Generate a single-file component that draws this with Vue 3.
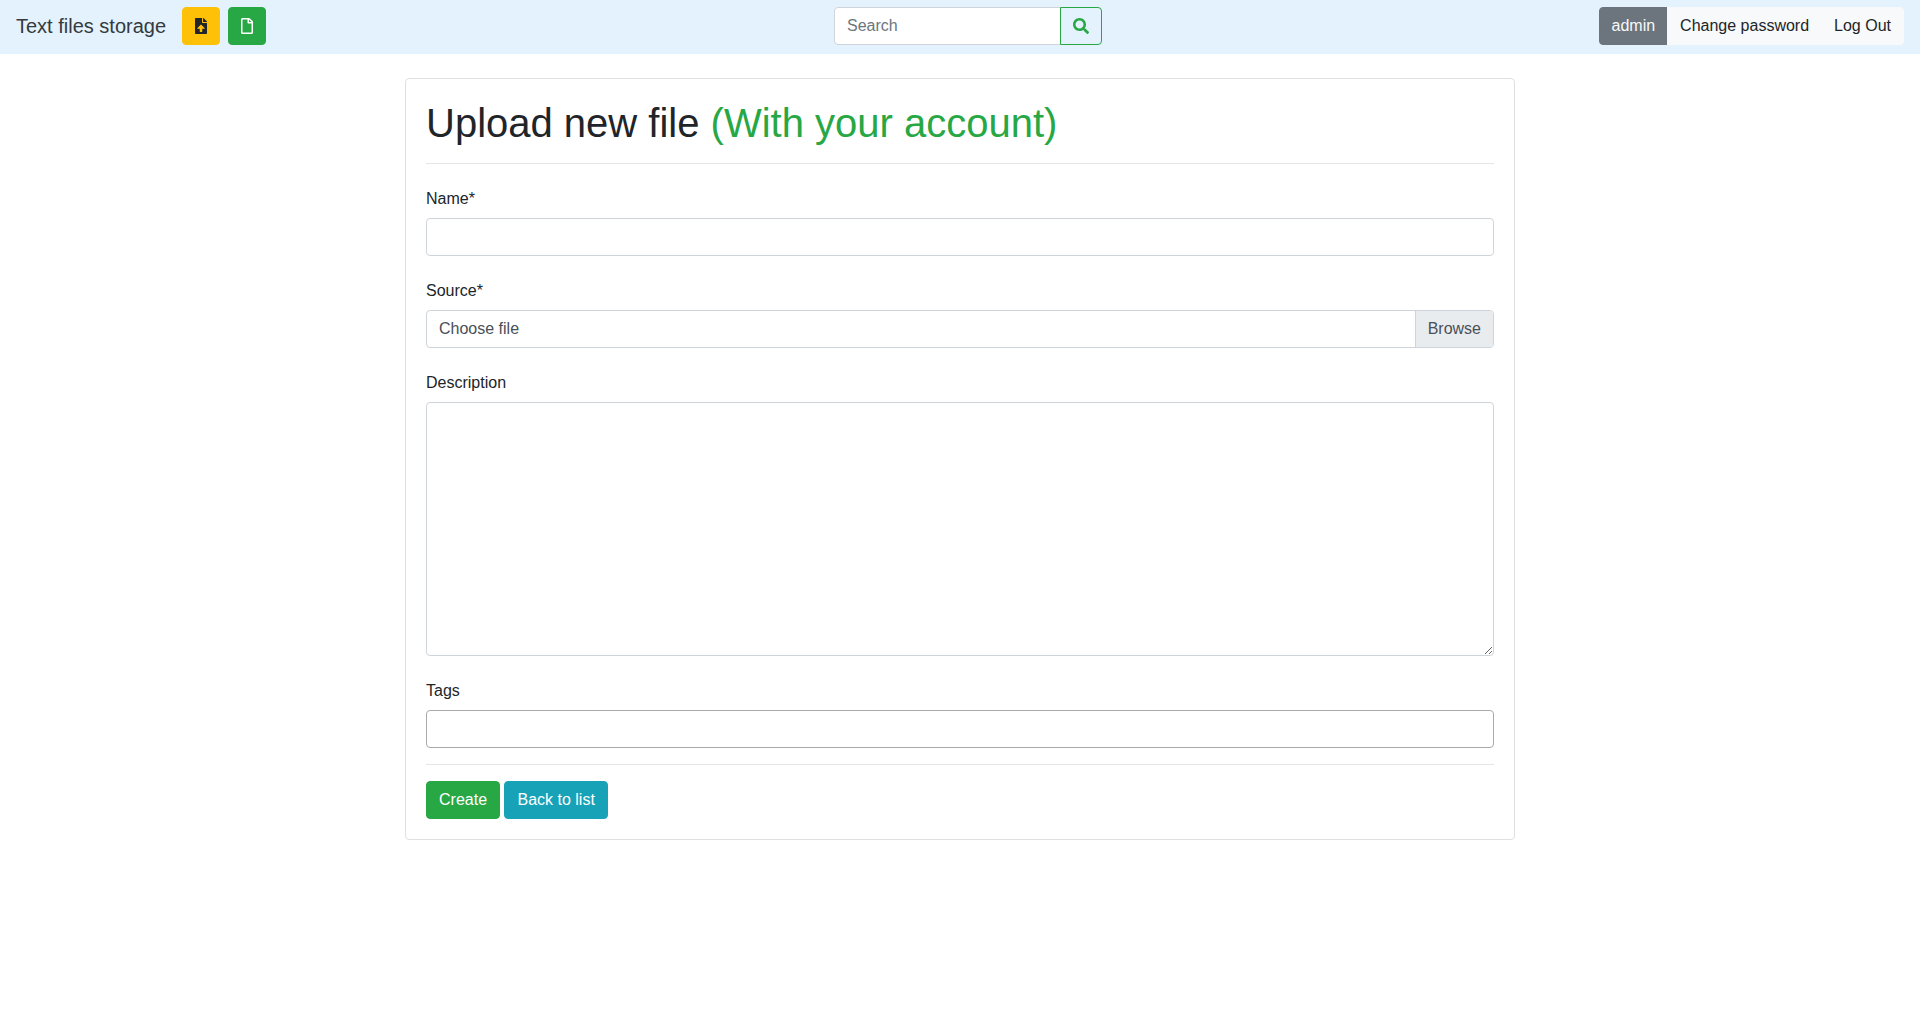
<script setup>
import { ref } from 'vue'

const query = ref('')
const name = ref('')
const description = ref('')
const tags = ref('')
const fileName = ref('Choose file')

function onFile(event) {
  const file = event.target.files[0]
  fileName.value = file ? file.name : 'Choose file'
}
</script>

<template>
  <div class="page">
    <nav class="navbar">
      <div class="nav-start">
        <a class="brand" href="#">Text files storage</a>
        <a class="btn btn-warning" href="#" aria-label="Upload file">
          <svg class="icon-file" viewBox="0 0 384 512" aria-hidden="true">
            <path fill="currentColor" d="M224 136V0H24C10.7 0 0 10.7 0 24v464c0 13.3 10.7 24 24 24h336c13.3 0 24-10.7 24-24V160H248c-13.2 0-24-10.8-24-24zm76 210H232v86c0 8.84-7.16 16-16 16h-48c-8.84 0-16-7.16-16-16v-86H84c-14 0-18-14-10-22l106-106c6.65-6.61 17.39-6.61 24.04 0l106 106c8 8 4 22-10 22zM377 105L279.1 7c-4.5-4.5-10.6-7-17-7H256v128h128v-6.1c0-6.3-2.5-12.4-7-16.9z" />
          </svg>
        </a>
        <a class="btn btn-success" href="#" aria-label="New file">
          <svg class="icon-file" viewBox="0 0 384 512" aria-hidden="true">
            <path fill="currentColor" d="M369.9 97.9L286 14C277 5 264.8-.1 252.1-.1H48C21.5 0 0 21.5 0 48v416c0 26.5 21.5 48 48 48h288c26.5 0 48-21.5 48-48V131.9c0-12.7-5.1-25-14.1-34zM332.1 128H256V51.9l76.1 76.1zM48 464V48h160v104c0 13.3 10.7 24 24 24h104v288H48z" />
          </svg>
        </a>
      </div>

      <form class="search" @submit.prevent>
        <input v-model="query" class="control search-input" type="search" placeholder="Search" aria-label="Search">
        <button class="btn btn-outline" type="submit" aria-label="Search">
          <svg class="icon-search" viewBox="0 0 512 512" aria-hidden="true">
            <path fill="currentColor" d="M505 442.7L405.3 343c-4.5-4.5-10.6-7-17-7H372c27.6-35.3 44-79.7 44-128C416 93.1 322.9 0 208 0S0 93.1 0 208s93.1 208 208 208c48.3 0 92.7-16.4 128-44v16.3c0 6.4 2.5 12.5 7 17l99.7 99.7c9.4 9.4 24.6 9.4 33.9 0l28.3-28.3c9.4-9.4 9.4-24.6.1-34zM208 336c-70.7 0-128-57.2-128-128 0-70.7 57.2-128 128-128 70.7 0 128 57.2 128 128 0 70.7-57.2 128-128 128z" />
          </svg>
        </button>
      </form>

      <div class="account">
        <a class="btn btn-secondary" href="#">admin</a>
        <a class="btn btn-light" href="#">Change password</a>
        <a class="btn btn-light" href="#">Log Out</a>
      </div>
    </nav>

    <main class="card">
      <h1>Upload new file <span class="note">(With your account)</span></h1>
      <hr>
      <form @submit.prevent>
        <div class="field">
          <label for="name">Name*</label>
          <input id="name" v-model="name" class="control" type="text" required>
        </div>
        <div class="field">
          <label for="source">Source*</label>
          <div class="file">
            <input id="source" class="file-input" type="file" required @change="onFile">
            <label class="file-label" for="source">
              <span class="file-name">{{ fileName }}</span>
              <span class="file-browse">Browse</span>
            </label>
          </div>
        </div>
        <div class="field">
          <label for="description">Description</label>
          <textarea id="description" v-model="description" class="control" rows="10"></textarea>
        </div>
        <div class="field">
          <label for="tags">Tags</label>
          <input id="tags" v-model="tags" class="control control-tags" type="text">
        </div>
        <hr>
        <div class="actions">
          <button class="btn btn-success" type="submit">Create</button>{{ ' ' }}<a class="btn btn-info" href="#">Back to list</a>
        </div>
      </form>
    </main>
  </div>
</template>

<style>
body {
  margin: 0;
  background: #fff;
}
</style>

<style scoped>
.page,
.page * {
  box-sizing: border-box;
}

.page {
  font-family: "Liberation Sans", Arial, sans-serif;
  font-size: 16px;
  line-height: 24px;
  color: #212529;
}

.navbar {
  display: grid;
  grid-template-columns: 1fr auto 1fr;
  align-items: center;
  padding: 7px 16px 9px;
  background: #e3f2fd;
}

.nav-start {
  display: flex;
  align-items: center;
  gap: 8px;
}

.brand {
  margin-right: 8px;
  font-size: 20px;
  line-height: 30px;
  color: #343a40;
  text-decoration: none;
  white-space: nowrap;
}

.btn {
  display: inline-flex;
  align-items: center;
  justify-content: center;
  height: 38px;
  padding: 0 12px;
  border: 1px solid transparent;
  border-radius: 4px;
  font: inherit;
  text-decoration: none;
  white-space: nowrap;
  cursor: pointer;
}

.btn-warning {
  background: #ffc107;
  border-color: #ffc107;
  color: #212529;
}

.btn-success {
  background: #28a745;
  border-color: #28a745;
  color: #fff;
}

.btn-info {
  background: #17a2b8;
  border-color: #17a2b8;
  color: #fff;
}

.btn-secondary {
  background: #6c757d;
  border-color: #6c757d;
  color: #f8f9fa;
}

.btn-light {
  background: #f8f9fa;
  border-color: #f8f9fa;
  color: #212529;
}

.btn-outline {
  margin-left: -1px;
  background: transparent;
  border-color: #28a745;
  border-radius: 0 4px 4px 0;
  color: #28a745;
}

.icon-file {
  width: 12px;
  height: 16px;
}

.icon-search {
  width: 16px;
  height: 16px;
}

.search {
  display: flex;
  margin-left: 16px;
}

.account {
  display: flex;
  justify-self: end;
}

.account .btn {
  border-radius: 0;
}

.account .btn + .btn {
  margin-left: -1px;
}

.account .btn:first-child {
  border-radius: 4px 0 0 4px;
}

.account .btn:last-child {
  border-radius: 0 4px 4px 0;
}

.control {
  display: block;
  width: 100%;
  height: 38px;
  margin: 0;
  padding: 6px 12px;
  border: 1px solid #ced4da;
  border-radius: 4px;
  background: #fff;
  font: inherit;
  color: #495057;
  appearance: none;
}

.control::placeholder {
  color: #6c757d;
  opacity: 1;
}

textarea.control {
  height: auto;
  resize: vertical;
}

.control-tags {
  border-color: #aaa;
}

.search-input {
  width: 227px;
  border-radius: 4px 0 0 4px;
}

.card {
  max-width: 1110px;
  margin: 24px auto;
  padding: 20px;
  border: 1px solid #dfdfdf;
  border-radius: 4px;
  background: #fff;
}

h1 {
  margin: 0;
  font-size: 40px;
  font-weight: 500;
  line-height: 48px;
}

.note {
  color: #28a745;
}

hr {
  height: 1px;
  margin: 16px 0;
  border: 0;
  background: #e5e5e5;
}

.field {
  margin-top: 23px;
}

.field > label {
  display: block;
  width: fit-content;
  margin-bottom: 7px;
}

.file {
  display: grid;
}

.file-input,
.file-label {
  grid-area: 1 / 1;
  width: 100%;
  height: 38px;
}

.file-input {
  margin: 0;
  opacity: 0;
}

.file-label {
  display: flex;
  overflow: hidden;
  border: 1px solid #ced4da;
  border-radius: 4px;
  background: #fff;
  color: #495057;
}

.file-name {
  flex: 1;
  padding: 6px 12px;
}

.file-browse {
  padding: 6px 12px;
  border-left: 1px solid #ced4da;
  background: #e9ecef;
}
</style>
